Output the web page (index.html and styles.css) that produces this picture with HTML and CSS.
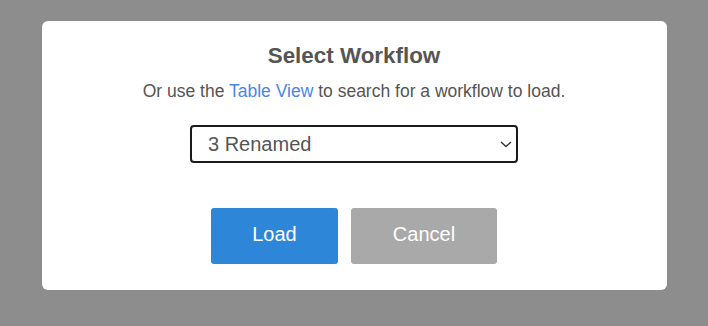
FILE: index.html
```html
<!DOCTYPE html>
<html lang="en">
<head>
<meta charset="utf-8">
<title>Select Workflow</title>
<link rel="stylesheet" href="styles.css">
</head>
<body>
  <div class="modal">
    <h2 class="title">Select Workflow</h2>
    <p class="subtitle">Or use the <a class="link" href="#">Table View</a> to search for a workflow to load.</p>
    <div class="select-wrap">
      <select class="select">
        <option>3 Renamed</option>
      </select>
      <svg class="chevron" width="12" height="7" viewBox="0 0 12 7" aria-hidden="true">
        <path d="M1 1 L6 5.5 L11 1" fill="none" stroke="#333" stroke-width="1.4"/>
      </svg>
    </div>
    <div class="actions">
      <button class="btn btn-load">Load</button>
      <button class="btn btn-cancel">Cancel</button>
    </div>
  </div>
</body>
</html>
```
FILE: styles.css
```css
html, body {
  margin: 0;
  padding: 0;
}
body {
  background: #8e8d8e;
  font-family: "Liberation Sans", Arial, sans-serif;
  padding-top: 21px;
  height: 326px;
  box-sizing: border-box;
}
.modal {
  width: 625px;
  height: 269px;
  margin: 0 auto;
  background: #fff;
  border-radius: 6px;
  box-sizing: border-box;
  padding-top: 22px;
  display: flex;
  flex-direction: column;
  align-items: center;
}
.title {
  margin: 0;
  font-size: 22.4px;
  line-height: 26px;
  font-weight: bold;
  color: #555;
}
.subtitle {
  margin: 12px 0 0;
  font-size: 17.5px;
  line-height: 20px;
  color: #555;
}
.link {
  color: #4a86e8;
  text-decoration: none;
}
.select-wrap {
  position: relative;
  margin-top: 24px;
  width: 328px;
  height: 38px;
}
.select {
  appearance: none;
  -webkit-appearance: none;
  width: 100%;
  height: 100%;
  box-sizing: border-box;
  border: 2px solid #1a1a1a;
  border-radius: 4px;
  background: #fff;
  font-family: "Liberation Sans", Arial, sans-serif;
  font-size: 20px;
  color: #555;
  padding: 0 0 0 16px;
  outline: none;
}
.chevron {
  position: absolute;
  right: 6px;
  top: 16px;
  pointer-events: none;
}
.actions {
  margin-top: 45px;
  display: flex;
  gap: 13px;
}
.btn {
  height: 56px;
  border: none;
  border-radius: 3px;
  color: #fff;
  font-family: "Liberation Sans", Arial, sans-serif;
  font-size: 20px;
  padding: 0 0 3px;
}
.btn-load {
  width: 127px;
  background: #2e86d9;
}
.btn-cancel {
  width: 146px;
  background: #a9a9a9;
}
```
